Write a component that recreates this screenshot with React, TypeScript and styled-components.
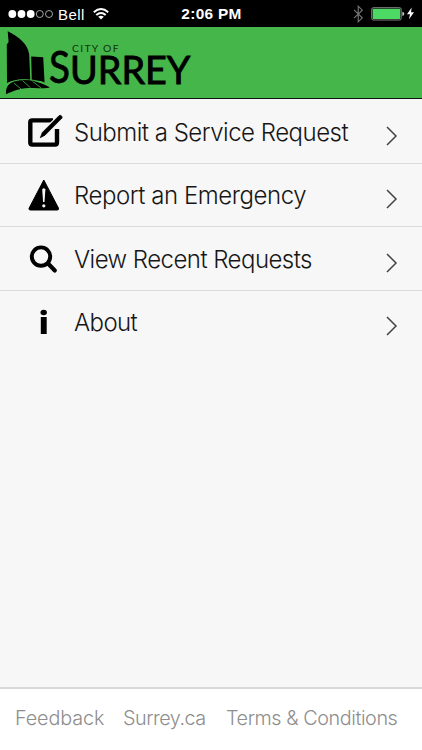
import React from "react";
import styled, { createGlobalStyle } from "styled-components";

const GlobalStyle = createGlobalStyle`
  * { box-sizing: border-box; }
  body { margin: 0; background: #f7f7f7; font-family: Inter, "Liberation Sans", sans-serif; }
`;

const Screen = styled.div`
  display: flex;
  flex-direction: column;
  width: 422px;
  height: 750px;
  overflow: hidden;
  background: #f7f7f7;
`;

const StatusBar = styled.header`
  display: grid;
  grid-template-columns: 1fr auto 1fr;
  align-items: center;
  flex: none;
  height: 27px;
  padding: 1px 7px 0 8px;
  background: #000;
  color: #fff;
  font-family: "Liberation Sans", sans-serif;
  font-size: 15px;
`;

const StatusGroup = styled.div<{ $end?: boolean }>`
  display: flex;
  align-items: center;
  justify-content: ${(p) => (p.$end ? "flex-end" : "flex-start")};
`;

const Carrier = styled.span`
  margin: 0 8px 0 4px;
  letter-spacing: 0.4px;
`;

const Clock = styled.span`
  font-weight: 700;
  font-size: 15.4px;
  letter-spacing: 0.3px;
`;

const Banner = styled.div`
  flex: none;
  height: 72px;
  background: #45b649;
  border-bottom: 1.5px solid #0a160a;
`;

const Icon = styled.svg`
  display: block;
  flex: none;
`;

const Menu = styled.nav`
  flex: 1;
  padding-top: 1px;
`;

const Row = styled.a<{ $last?: boolean }>`
  display: flex;
  align-items: center;
  height: 63.5px;
  padding-right: 24px;
  border-bottom: 1.5px solid ${(p) => (p.$last ? "transparent" : "#dcdcdc")};
  color: #161616;
`;

const IconCell = styled.span`
  display: flex;
  width: 40px;
  margin-left: 24px;
`;

const Label = styled.span<{ $tracking: number }>`
  flex: 1;
  margin-left: 10px;
  padding-top: 3px;
  font-size: 24px;
  font-weight: 300;
  line-height: 30px;
  letter-spacing: ${(p) => p.$tracking}px;
  white-space: nowrap;
`;

const Chevron = styled(Icon)`
  margin-top: 9px;
`;

const Footer = styled.footer`
  display: flex;
  flex: none;
  height: 63px;
  padding: 16px 0 0 15px;
  border-top: 2px solid #d8d8d8;
  background: #fff;
`;

const FooterLink = styled.a<{ $width: number; $tracking: number }>`
  width: ${(p) => p.$width}px;
  color: #8e8e8e;
  font-size: 19.8px;
  font-weight: 300;
  line-height: 26px;
  letter-spacing: ${(p) => p.$tracking}px;
  white-space: nowrap;
`;

const LogoWord = styled.text<{ $weight: number }>`
  font-family: Lato, sans-serif;
  stroke: #000;
  stroke-width: ${(p) => p.$weight}px;
`;

function Logo() {
  return (
    <Icon width="200" height="70" viewBox="0 27 200 70" role="img" aria-label="City of Surrey">
      <path d="M7.7 31.3C18 36 28 44 29.2 54.5L30.3 81C22 78 14 80 7 83L6.8 44.5L8.6 42Z" />
      <path d="M31.2 56.6L43.2 57.3L44.6 82.4L41 81L31.8 80.2Z" />
      <path d="M6 94.3C5.5 88 8 83.5 14 81.2C26 77.5 38 81 50 87.4C38 89.5 29 87 21.5 88.8C14 90.5 10 92.5 6 94.3Z" />
      <path d="M6.5 84.2C16 78.5 31 78 43 83M14 83.2L21 89M22.5 80.6L30.5 87.8M32.5 81.3L41 87.8" fill="none" stroke="#45b649" strokeWidth="0.8" />
      <LogoWord $weight={0} x="72" y="52" fontSize="10.3" textLength="46.5" fill="#12320f">CITY OF</LogoWord>
      <LogoWord $weight={0.8} x="49" y="83.3" fontSize="44.5" textLength="21" lengthAdjust="spacingAndGlyphs">S</LogoWord>
      <LogoWord $weight={0.9} x="70" y="83.5" fontSize="38" textLength="120.4" lengthAdjust="spacingAndGlyphs">URREY</LogoWord>
    </Icon>
  );
}

const glyphs = {
  edit: (
    <>
      <path d="M29 6.4H8.3Q6.3 6.4 6.3 8.4V28.6Q6.3 30.6 8.3 30.6H31Q33 30.6 33 28.6V15" fill="none" stroke="#000" strokeWidth="4.4" />
      <path d="M16.3 23.7L18.3 18.5L35.2 1.6Q36.3 0.8 37.5 1.9Q38.7 3.2 37.8 4.3L21 21.2Z" stroke="#f7f7f7" strokeWidth="3" />
      <path d="M16.3 23.7L18.3 18.5L35.2 1.6Q36.3 0.8 37.5 1.9Q38.7 3.2 37.8 4.3L21 21.2Z" stroke="#000" strokeWidth="0.7" />
    </>
  ),
  alert: (
    <>
      <path d="M19.8 2L34.5 30.2Q35 32 33.3 32H6.3Q4.6 32 5.1 30.2Z" stroke="#000" strokeWidth="1" strokeLinejoin="round" />
      <path d="M18.2 11.5Q19.8 9 21.4 11.5L20.5 24H19.1Z" fill="#f7f7f7" />
      <circle cx="19.8" cy="27.8" r="1.6" fill="#f7f7f7" />
    </>
  ),
  search: (
    <g fill="none" stroke="#000" strokeLinecap="round">
      <circle cx="17" cy="15.6" r="9.2" strokeWidth="3.9" />
      <path d="M24 22.6L30.8 29.4" strokeWidth="4.2" />
    </g>
  ),
  info: (
    <>
      <ellipse cx="19.7" cy="7.5" rx="3.2" ry="2.7" />
      <path d="M16.8 12H22.7V29H16.8Z" />
    </>
  ),
};

const items: { label: string; icon: keyof typeof glyphs; tracking: number }[] = [
  { label: "Submit a Service Request", icon: "edit", tracking: -0.5 },
  { label: "Report an Emergency", icon: "alert", tracking: -0.45 },
  { label: "View Recent Requests", icon: "search", tracking: -0.54 },
  { label: "About", icon: "info", tracking: -0.6 },
];

export default function App() {
  return (
    <>
      <GlobalStyle />
      <Screen>
        <StatusBar>
          <StatusGroup>
            <Icon width="46" height="10" viewBox="0 0 46 10">
              {[4.3, 13.5, 22.7].map((x) => (
                <circle key={x} cx={x} cy="5" r="3.9" fill="#fff" />
              ))}
              {[31.8, 41].map((x) => (
                <circle key={x} cx={x} cy="5" r="3.5" fill="none" stroke="#b5b5b5" strokeWidth="0.9" />
              ))}
            </Icon>
            <Carrier>Bell</Carrier>
            <Icon width="16" height="12" viewBox="0 0 16 12">
              <g fill="none" stroke="#fff" strokeWidth="1.9">
                <path d="M0.8 4.2Q8 -2.2 15.2 4.2" />
                <path d="M3.3 7Q8 2.8 12.7 7" />
              </g>
              <path d="M5.2 8.8Q8 6.6 10.8 8.8L8 11.6Z" fill="#fff" />
            </Icon>
          </StatusGroup>
          <Clock>2:06 PM</Clock>
          <StatusGroup $end>
            <Icon width="62" height="18" viewBox="0 0 62 18">
              <path d="M1 4.8L9.3 12.8L5.2 16.8V1.2L9.3 5.2L1 13.2" fill="none" stroke="#777" strokeWidth="1.1" />
              <rect x="18.7" y="2.7" width="29.5" height="12.3" rx="1.6" fill="#000" stroke="#a5a5a5" strokeWidth="0.8" />
              <rect x="19.7" y="3.7" width="27.5" height="10.3" rx="0.5" fill="#4cd964" />
              <path d="M49.4 6.7Q51.3 7 51.3 8.8Q51.3 10.6 49.4 11Z" fill="#ccc" />
              <path d="M58.7 2.5L54 9.3H57L56 14.3L61 7.3H58Z" fill="#fff" />
            </Icon>
          </StatusGroup>
        </StatusBar>
        <Banner>
          <Logo />
        </Banner>
        <Menu>
          {items.map(({ label, icon, tracking }, i) => (
            <Row key={label} $last={i === items.length - 1}>
              <IconCell>
                <Icon width="40" height="34" viewBox="0 0 40 34">{glyphs[icon]}</Icon>
              </IconCell>
              <Label $tracking={tracking}>{label}</Label>
              <Chevron width="13" height="20" viewBox="0 0 13 20">
                <path d="M2 1L11 10L2 19" fill="none" stroke="#444" strokeWidth="1.5" />
              </Chevron>
            </Row>
          ))}
        </Menu>
        <Footer>
          <FooterLink $width={108} $tracking={-0.12}>Feedback</FooterLink>
          <FooterLink $width={103} $tracking={-0.5}>Surrey.ca</FooterLink>
          <FooterLink $width={180} $tracking={-0.43}>Terms &amp; Conditions</FooterLink>
        </Footer>
      </Screen>
    </>
  );
}
